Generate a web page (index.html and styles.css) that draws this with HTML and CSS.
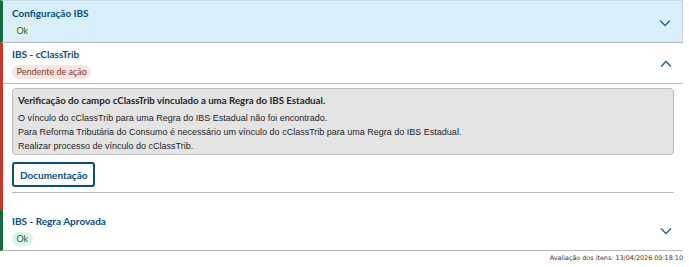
FILE: index.html
```html
<!DOCTYPE html>
<html lang="pt-BR">
<head>
  <meta charset="UTF-8">
  <title>Avaliação dos itens</title>
  <link rel="stylesheet" href="styles.css">
</head>
<body>

  <div class="checks">

    <section class="check check-ok check-highlight">
      <div class="check-head">
        <div class="check-info">
          <div class="check-title">Configuração IBS</div>
          <span class="badge badge-ok">Ok</span>
        </div>
        <svg class="chevron" width="12" height="8" viewBox="0 0 12 8"><path d="M1 1.5 L6 6.5 L11 1.5" fill="none" stroke="currentColor" stroke-width="1.3"/></svg>
      </div>
    </section>

    <section class="check check-pending">
      <div class="check-head">
        <div class="check-info">
          <div class="check-title">IBS - cClassTrib</div>
          <span class="badge badge-pending">Pendente de ação</span>
        </div>
        <svg class="chevron" width="12" height="8" viewBox="0 0 12 8"><path d="M1 6.5 L6 1.5 L11 6.5" fill="none" stroke="currentColor" stroke-width="1.3"/></svg>
      </div>
      <div class="check-body">
        <div class="message">
          <div class="message-title">Verificação do campo cClassTrib vinculado a uma Regra do IBS Estadual.</div>
          <p>O vínculo do cClassTrib para uma Regra do IBS Estadual não foi encontrado.</p>
          <p>Para Reforma Tributária do Consumo é necessário um vínculo do cClassTrib para uma Regra do IBS Estadual.</p>
          <p>Realizar processo de vínculo do cClassTrib.</p>
        </div>
        <button class="doc-button">Documentação</button>
        <div class="body-end"></div>
      </div>
    </section>

    <section class="check check-ok">
      <div class="check-head">
        <div class="check-info">
          <div class="check-title">IBS - Regra Aprovada</div>
          <span class="badge badge-ok">Ok</span>
        </div>
        <svg class="chevron" width="12" height="8" viewBox="0 0 12 8"><path d="M1 1.5 L6 6.5 L11 1.5" fill="none" stroke="currentColor" stroke-width="1.3"/></svg>
      </div>
    </section>

  </div>

  <div class="stamp">Avaliação dos itens: 13/04/2026 09:18:10</div>

</body>
</html>
```

FILE: styles.css
```css
body {
  margin: 0;
  font-family: Lato, "Open Sans", sans-serif;
  background-color: #ffffff;
  color: #222;
}

.checks {
  width: 683px;
}

.check {
  border-left: 3px solid #136b3e;
  border-bottom: 1px solid #b9b9b9;
  background-color: #ffffff;
}

.check-ok { border-left-color: #136b3e; }
.check-pending { border-left-color: #c4372d; border-bottom: none; }

.check-highlight {
  background-color: #d8eefa;
  border-top: 1px solid #c9dbe6;
  border-right: 1px solid #c9d4db;
}

.check-head {
  display: flex;
  justify-content: space-between;
  align-items: center;
  padding: 5px 11px 4px 9px;
}

.check-highlight .check-head {
  padding-top: 6px;
}

.check-info {
  display: flex;
  flex-direction: column;
  align-items: flex-start;
  gap: 4px;
}

.check-pending .check-head {
  border-bottom: 1px solid #b9b9b9;
}

.check-title {
  font-size: 10px;
  font-weight: 700;
  color: #0b4d7e;
  line-height: 13px;
}

.badge {
  display: block;
  font-size: 9px;
  line-height: 14px;
  padding: 0 4.5px;
  border-radius: 7px;
}

.badge-ok {
  background-color: #dcf4e6;
  color: #2f5a44;
}

.badge-pending {
  background-color: #fbe3df;
  color: #7c3b31;
}

.chevron {
  color: #1f5f8c;
}

.check-body {
  padding: 4px 9px 17px 9px;
}

.message {
  background-color: #e4e4e4;
  border: 1px solid #bdbdbd;
  border-radius: 4px;
  padding: 5px 6px 1px 5px;
  font-family: "Liberation Sans", Arial, sans-serif;
  font-size: 9px;
  color: #262626;
}

.message-title {
  font-family: Lato, "Open Sans", sans-serif;
  font-weight: 700;
  font-size: 9.7px;
  line-height: 13px;
  margin-bottom: 4px;
}

.message p {
  margin: 0;
  line-height: 14px;
}

.doc-button {
  display: block;
  margin-top: 7px;
  padding: 0 6px;
  height: 25px;
  border: 2px solid #0b4d7e;
  border-radius: 3px;
  background-color: #ffffff;
  color: #0b4d7e;
  font-family: Lato, "Open Sans", sans-serif;
  font-weight: 700;
  font-size: 10px;
}

.body-end {
  margin-top: 5px;
  border-top: 1px solid #b9b9b9;
}

.stamp {
  width: 683px;
  text-align: right;
  font-family: "DejaVu Sans", Verdana, sans-serif;
  font-size: 6.4px;
  line-height: 9px;
  color: #333;
  margin-top: 3px;
}
```
